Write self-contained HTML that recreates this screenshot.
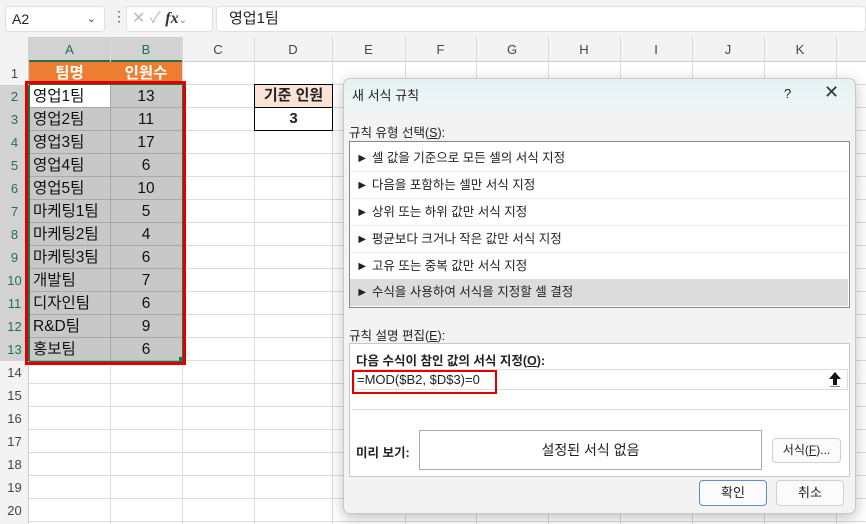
<!DOCTYPE html>
<html><head><meta charset="utf-8"><style>
*{margin:0;padding:0;box-sizing:border-box}
body{width:866px;height:524px;overflow:hidden;background:#fff;font-family:"Liberation Sans","Noto Sans CJK KR",sans-serif;position:relative;font-size:14px;color:#222}
.a{position:absolute}
.vl{position:absolute;top:37px;width:1px;height:487px;background:#dcdcdc}
.ch{position:absolute;top:37px;height:25px;line-height:25px;text-align:center;color:#444;font-size:13px}
.rh{position:absolute;left:0;width:29px;height:23px;line-height:23px;text-align:center;color:#444;font-size:13px}
.c{position:absolute;height:23px;line-height:23px;font-size:15.5px;color:#111}
.it{position:absolute;left:350px;width:498px;height:27px;line-height:27px;padding-left:6px;font-size:12.5px;border-bottom:1px solid #eee;color:#222}
.btn{position:absolute;background:#fbfbfb;border:1px solid #d0d0d0;border-radius:4px;text-align:center;font-size:13px}
</style></head><body>
<div class="a" style="left:0;top:0;width:866px;height:37px;background:#f3f3f3"></div>
<div class="a" style="left:5px;top:6px;width:100px;height:26px;background:#fff;border:1px solid #e0e0e0;border-radius:4px;font-size:14px;line-height:24px;padding-left:6px">A2<span style="position:absolute;right:8px;top:0;font-size:11px;color:#444">&#8964;</span></div>
<div class="a" style="left:112px;top:8px;font-size:14px;color:#555">&#8942;</div>
<div class="a" style="left:126px;top:6px;width:87px;height:26px;background:#fff;border:1px solid #e0e0e0;border-radius:4px;color:#bbb;font-size:16px;line-height:24px;padding-left:5px">✕ ✓ <i style="font-family:'Liberation Serif',serif;color:#333;font-weight:bold">fx</i><span style="font-size:10px;color:#888">&#8964;</span></div>
<div class="a" style="left:216px;top:6px;width:650px;height:26px;background:#fff;border:1px solid #e0e0e0;border-radius:4px;line-height:24px;padding-left:12px;font-size:15px">영업1팀</div>
<div class="a" style="left:0;top:37px;width:866px;height:25px;background:#f3f3f3;border-bottom:1px solid #d0d0d0"></div>
<div class="a" style="left:0;top:37px;width:29px;height:487px;background:#f3f3f3;border-right:1px solid #d0d0d0"></div>
<div class="a" style="left:29px;top:37px;width:153px;height:25px;background:#d2d2d2;border-bottom:2px solid #217346"></div>
<div class="a" style="left:0;top:85px;width:29px;height:276px;background:#d2d2d2;border-right:2px solid #217346"></div>
<div class="vl" style="left:110px"></div><div class="vl" style="left:182px"></div><div class="vl" style="left:254px"></div><div class="vl" style="left:332px"></div><div class="vl" style="left:405px"></div><div class="vl" style="left:476px"></div><div class="vl" style="left:548px"></div><div class="vl" style="left:620px"></div><div class="vl" style="left:692px"></div><div class="vl" style="left:764px"></div><div class="vl" style="left:836px"></div>
<div class="a" style="left:29px;top:62px;width:837px;height:462px;background:repeating-linear-gradient(to bottom,transparent 0,transparent 22px,#dcdcdc 22px,#dcdcdc 23px)"></div>
<div class="ch" style="left:29px;width:81px;color:#217346">A</div><div class="ch" style="left:110px;width:72px;color:#217346">B</div><div class="ch" style="left:182px;width:72px">C</div><div class="ch" style="left:254px;width:78px">D</div><div class="ch" style="left:332px;width:73px">E</div><div class="ch" style="left:405px;width:71px">F</div><div class="ch" style="left:476px;width:72px">G</div><div class="ch" style="left:548px;width:72px">H</div><div class="ch" style="left:620px;width:72px">I</div><div class="ch" style="left:692px;width:72px">J</div><div class="ch" style="left:764px;width:72px">K</div>
<div class="rh" style="top:62px">1</div><div class="rh" style="top:85px;color:#217346">2</div><div class="rh" style="top:108px;color:#217346">3</div><div class="rh" style="top:131px;color:#217346">4</div><div class="rh" style="top:154px;color:#217346">5</div><div class="rh" style="top:177px;color:#217346">6</div><div class="rh" style="top:200px;color:#217346">7</div><div class="rh" style="top:223px;color:#217346">8</div><div class="rh" style="top:246px;color:#217346">9</div><div class="rh" style="top:269px;color:#217346">10</div><div class="rh" style="top:292px;color:#217346">11</div><div class="rh" style="top:315px;color:#217346">12</div><div class="rh" style="top:338px;color:#217346">13</div><div class="rh" style="top:361px">14</div><div class="rh" style="top:384px">15</div><div class="rh" style="top:407px">16</div><div class="rh" style="top:430px">17</div><div class="rh" style="top:453px">18</div><div class="rh" style="top:476px">19</div><div class="rh" style="top:499px">20</div>
<div class="a" style="left:29px;top:62px;width:153px;height:22px;background:#ed7d31"></div>
<div class="c" style="left:29px;top:62px;width:81px;text-align:center;color:#fff;font-weight:bold">팀명</div>
<div class="c" style="left:110px;top:62px;width:72px;text-align:center;color:#fff;font-weight:bold">인원수</div>
<div class="a" style="left:29px;top:85px;width:153px;height:276px;background:repeating-linear-gradient(to bottom,#c8c8c8 0,#c8c8c8 22px,#a8a8a8 22px,#a8a8a8 23px)"></div>
<div class="a" style="left:110px;top:85px;width:1px;height:276px;background:#a8a8a8"></div>
<div class="a" style="left:30px;top:85px;width:80px;height:22px;background:#fff"></div>
<div class="a" style="left:29px;top:84px;width:154px;height:278px;border:1px solid #217346"></div>
<div class="a" style="left:179px;top:357px;width:5px;height:5px;background:#217346"></div>
<div class="a" style="left:25px;top:81px;width:161px;height:284px;border:3px solid #e00000"></div>
<div class="c" style="left:33px;top:85px">영업1팀</div><div class="c" style="left:110px;top:85px;width:72px;text-align:center">13</div>
<div class="c" style="left:33px;top:108px">영업2팀</div><div class="c" style="left:110px;top:108px;width:72px;text-align:center">11</div>
<div class="c" style="left:33px;top:131px">영업3팀</div><div class="c" style="left:110px;top:131px;width:72px;text-align:center">17</div>
<div class="c" style="left:33px;top:154px">영업4팀</div><div class="c" style="left:110px;top:154px;width:72px;text-align:center">6</div>
<div class="c" style="left:33px;top:177px">영업5팀</div><div class="c" style="left:110px;top:177px;width:72px;text-align:center">10</div>
<div class="c" style="left:33px;top:200px">마케팅1팀</div><div class="c" style="left:110px;top:200px;width:72px;text-align:center">5</div>
<div class="c" style="left:33px;top:223px">마케팅2팀</div><div class="c" style="left:110px;top:223px;width:72px;text-align:center">4</div>
<div class="c" style="left:33px;top:246px">마케팅3팀</div><div class="c" style="left:110px;top:246px;width:72px;text-align:center">6</div>
<div class="c" style="left:33px;top:269px">개발팀</div><div class="c" style="left:110px;top:269px;width:72px;text-align:center">7</div>
<div class="c" style="left:33px;top:292px">디자인팀</div><div class="c" style="left:110px;top:292px;width:72px;text-align:center">6</div>
<div class="c" style="left:33px;top:315px">R&amp;D팀</div><div class="c" style="left:110px;top:315px;width:72px;text-align:center">9</div>
<div class="c" style="left:33px;top:338px">홍보팀</div><div class="c" style="left:110px;top:338px;width:72px;text-align:center">6</div>
<div class="a" style="left:254px;top:84px;width:79px;height:24px;background:#fbe3d5;border:1px solid #000;text-align:center;font-weight:bold;font-size:15px;line-height:22px">기준 인원</div>
<div class="a" style="left:254px;top:107px;width:79px;height:24px;background:#fff;border:1px solid #000;text-align:center;font-weight:bold;font-size:15px;line-height:22px">3</div>
<div class="a" style="left:343px;top:78px;width:513px;height:436px;background:#f3f3f3;border:1px solid #c8c8c8;border-radius:7px;box-shadow:0 4px 14px rgba(0,0,0,.25)"></div>
<div class="a" style="left:344px;top:79px;width:511px;height:32px;background:linear-gradient(#e6f2f4,#eef5f6);border-radius:7px 7px 0 0"></div>
<div class="a" style="left:352px;top:85px;font-size:13px">새 서식 규칙</div>
<div class="a" style="left:784px;top:86px;font-size:13px">?</div>
<div class="a" style="left:824px;top:82px;font-size:18px;color:#333">✕</div>
<div class="a" style="left:349px;top:122px;font-size:12.5px">규칙 유형 선택(<u>S</u>):</div>
<div class="a" style="left:349px;top:141px;width:501px;height:167px;background:#fff;border:1px solid #888"></div>
<div class="it" style="top:145px">► 셀 값을 기준으로 모든 셀의 서식 지정</div>
<div class="it" style="top:172px">► 다음을 포함하는 셀만 서식 지정</div>
<div class="it" style="top:199px">► 상위 또는 하위 값만 서식 지정</div>
<div class="it" style="top:226px">► 평균보다 크거나 작은 값만 서식 지정</div>
<div class="it" style="top:253px">► 고유 또는 중복 값만 서식 지정</div>
<div class="it" style="top:279px;background:#dcdcdc;border:none">► 수식을 사용하여 서식을 지정할 셀 결정</div>
<div class="a" style="left:349px;top:325px;font-size:12.5px">규칙 설명 편집(<u>E</u>):</div>
<div class="a" style="left:349px;top:343px;width:501px;height:134px;background:#fff;border:1px solid #c8c8c8"></div>
<div class="a" style="left:356px;top:350px;font-size:12.5px;font-weight:bold">다음 수식이 참인 값의 서식 지정(<u>O</u>):</div>
<div class="a" style="left:354px;top:369px;width:494px;height:21px;border:1px solid #ddd;font-size:13px;line-height:19px;padding-left:2px">=MOD($B2, $D$3)=0</div>
<svg class="a" style="left:827px;top:371px" width="16" height="17" viewBox="0 0 16 17"><path d="M8 1 L14 8 H10 V14 H6 V8 H2 Z" fill="#111"/><rect x="3" y="15" width="10" height="1" fill="#888"/></svg>
<div class="a" style="left:352px;top:370px;width:145px;height:24px;border:2px solid #e00000"></div>
<div class="a" style="left:352px;top:409px;width:495px;height:1px;background:#ddd"></div>
<div class="a" style="left:356px;top:442px;font-size:12.5px;font-weight:bold">미리 보기:</div>
<div class="a" style="left:419px;top:430px;width:343px;height:40px;border:1px solid #aaa;text-align:center;line-height:38px;font-size:14px">설정된 서식 없음</div>
<div class="btn" style="left:772px;top:438px;width:69px;height:25px;line-height:23px;font-size:12px">서식(<u>F</u>)...</div>
<div class="btn" style="left:699px;top:480px;width:68px;height:26px;line-height:24px;border-color:#5b8fc7">확인</div>
<div class="btn" style="left:776px;top:480px;width:68px;height:26px;line-height:24px">취소</div>
</body></html>
